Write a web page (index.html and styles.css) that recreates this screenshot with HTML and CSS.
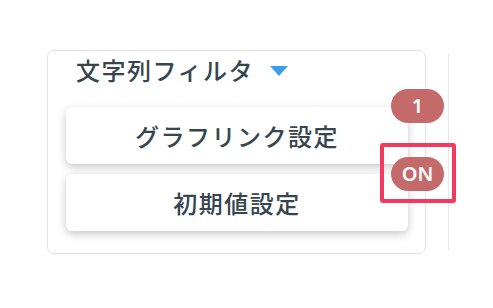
FILE: index.html
```html
<!DOCTYPE html>
<html lang="ja">
<head>
<meta charset="utf-8">
<link rel="stylesheet" href="styles.css">
</head>
<body>
<div class="scene">
  <div class="card">
    <div class="title-row">
      <span class="title">文字列フィルタ</span>
      <span class="caret"></span>
    </div>
    <div class="buttons">
      <div class="btn">グラフリンク設定</div>
      <div class="btn">初期値設定</div>
    </div>
    <span class="badge badge-count">1</span>
    <span class="highlight"></span>
    <span class="badge badge-on">ON</span>
  </div>
  <div class="divider"></div>
</div>
</body>
</html>
```
FILE: styles.css
```css
html, body {
  margin: 0;
  padding: 0;
  background: #ffffff;
}
body {
  font-family: "Noto Sans CJK JP", "Noto Sans", sans-serif;
  color: #36454e;
}
.scene {
  display: flex;
  align-items: flex-start;
  padding: 50px 0 0 47px;
}
.card {
  position: relative;
  box-sizing: border-box;
  width: 379px;
  height: 204px;
  border: 1px solid #e2e2e2;
  border-radius: 7px;
  padding: 4px 17px 0 18px;
}
.title-row {
  display: flex;
  align-items: center;
  height: 30px;
  padding-left: 10px;
}
.title {
  font-size: 24px;
  font-weight: 500;
  letter-spacing: 1.5px;
  line-height: 30px;
}
.caret {
  width: 0;
  height: 0;
  margin-left: 16px;
  margin-top: 2px;
  border-left: 9px solid transparent;
  border-right: 9px solid transparent;
  border-top: 10px solid #3d9fea;
}
.buttons {
  display: flex;
  flex-direction: column;
  gap: 10px;
  margin-top: 22px;
}
.btn {
  height: 57px;
  border-radius: 6px;
  background: #ffffff;
  box-shadow: 0 3px 8px rgba(0, 0, 0, 0.22);
  display: flex;
  align-items: center;
  justify-content: center;
  font-size: 24px;
  font-weight: 500;
  letter-spacing: 1.5px;
}
.badge {
  position: absolute;
  left: 343px;
  width: 53px;
  height: 34px;
  border-radius: 17px;
  background: #c56a6a;
  color: #ffffff;
  font-family: "Noto Sans", "Open Sans", sans-serif;
  font-weight: 600;
  font-size: 20px;
  line-height: 34px;
  text-align: center;
}
.badge-count {
  top: 38px;
}
.badge-on {
  top: 106px;
}
.highlight {
  position: absolute;
  left: 332px;
  top: 92px;
  width: 76px;
  height: 60px;
  box-sizing: border-box;
  border: 4px solid #f23a60;
  border-radius: 3px;
}
.divider {
  width: 1px;
  height: 196px;
  margin: 4px 0 0 22px;
  background: #e6e6e6;
}
```
